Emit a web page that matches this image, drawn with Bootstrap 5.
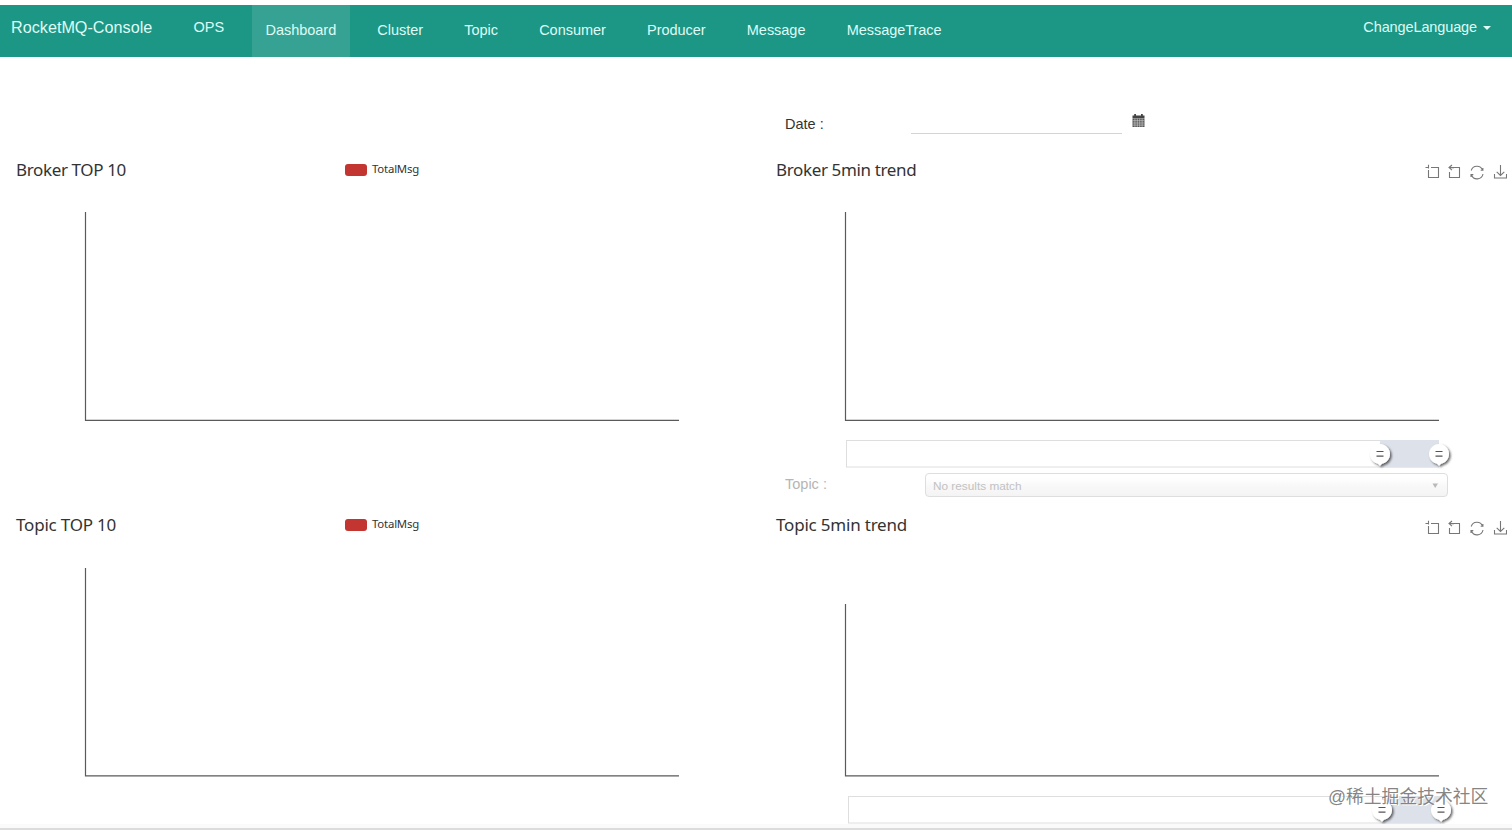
<!DOCTYPE html>
<html lang="en">
<head>
<meta charset="utf-8">
<title>RocketMQ-Console</title>
<link rel="stylesheet" href="https://cdn.jsdelivr.net/npm/bootstrap@5.3.0/dist/css/bootstrap.min.css">
<style>
body{font-family:"Liberation Sans",Arial,sans-serif;font-size:14.5px;color:#333;background:#fff;height:830px;overflow:hidden}
.console-nav{height:52.4px;margin-top:5px;padding:0 21px 0 11px;background:#1c9786;font-size:14.5px;line-height:20px}
.console-nav a{color:#dffbf5;text-decoration:none;white-space:nowrap}
.console-nav .brand-link{font-size:16.2px;width:182.5px;padding-top:12px}
.console-nav .ops-link{width:58.5px;padding-top:12px}
.console-nav .tab-link{padding:15px 13.5px 0;margin-right:14.2px;height:100%;letter-spacing:-.03px}
.console-nav .tab-link.active{background:#36a293}
.console-nav .lang-link{padding-top:12px;letter-spacing:-.12px}
.caret-down{border:4px solid transparent;border-top-color:#dffbf5;border-bottom:0;margin-left:6px}
.filter-band{height:87.6px;padding-top:47px}
.date-label{width:126px;line-height:40px}
.date-field{width:211px;height:30px;border:0;border-bottom:1px solid #d4d4d4;border-radius:0;background:transparent}
.left-pane{width:760px}.right-pane{width:752px}
.panel-head{height:50px;font-family:"Noto Sans","Open Sans",sans-serif}
.panel-title{font-size:17px;line-height:24px;color:#333;padding-left:16px;white-space:nowrap;letter-spacing:-.36px}
.title-lower{letter-spacing:-.2px;margin-top:-1px}
.legend-row{font-size:11.4px;line-height:16px;left:345px;top:16px;letter-spacing:-.2px}
.legend-lower{top:15px}
.legend-chip{width:22px;height:12px;border-radius:3px;background:#c23531;margin:2px 5px 0 0}
.tools{right:5px;top:19px}
.topic-band{height:31px;color:#b5b5b5;padding:3px 0 0 25px}
.topic-label{width:140px;line-height:23px}
.topic-select{width:523px;height:24px;border:1px solid #dedede;border-radius:4px;background:linear-gradient(#fff 20%,#f8f8f8 55%,#f4f4f4);font-size:11.8px;color:#c2c2c2;padding:3px 8px 0 7px}
.plot{display:block}
.foot-strip{height:6px;background:#fafafa;border-bottom:2px solid #dcdcdc}
.watermark{left:1328px;top:784px;font:17.8px/27px "Liberation Sans","Noto Sans CJK SC",sans-serif;color:rgba(125,125,125,.95);text-shadow:1px 1px 0 #fff;white-space:nowrap}
</style>
</head>
<body class="position-relative">
<nav class="console-nav d-flex">
  <a class="brand-link" href="#">RocketMQ-Console</a>
  <a class="ops-link" href="#">OPS</a>
  <a class="tab-link active" href="#">Dashboard</a>
  <a class="tab-link" href="#">Cluster</a>
  <a class="tab-link" href="#">Topic</a>
  <a class="tab-link" href="#">Consumer</a>
  <a class="tab-link" href="#">Producer</a>
  <a class="tab-link" href="#">Message</a>
  <a class="tab-link" href="#">MessageTrace</a>
  <a class="lang-link ms-auto" href="#">ChangeLanguage<span class="caret-down d-inline-block align-middle"></span></a>
</nav>

<svg width="0" height="0" class="position-absolute">
  <defs>
    <filter id="drop" x="-40%" y="-40%" width="190%" height="190%"><feDropShadow dx="1.6" dy="1.6" stdDeviation="1" flood-color="#000" flood-opacity=".6"/></filter>
    <g id="handle">
      <path d="M-2 9.8 L0 11.8 L2 9.8 A10 10 0 1 0 -2 9.8Z" fill="#fff" filter="url(#drop)"/>
      <path d="M-3.5 -2.5H3.5M-3.5 2.2H3.5" stroke="#555" stroke-width="1.2"/>
    </g>
    <g id="toolset" fill="none" stroke="#777" stroke-width="1.1">
      <path d="M.5 3.5H4M6 3.5H13.5V13.5H3.5V6M3.5 0.8V4.5"/>
      <path d="M29 3.5H34.5V13.5H24.5V8M27 1L24 3.6L27 6.2M24 3.6H29"/>
      <path d="M46.2 6.5A6 6 0 0 1 57.5 6M58 10A6 6 0 0 1 46.5 11M57.9 3.9V6.3H55.7M46 13V10.6H48.3"/>
      <path d="M75.5 1V11.2M71.7 7.8L75.5 11.4L79.3 7.8M69.5 10V14H81.5V10"/>
    </g>
  </defs>
</svg>

<div class="filter-band d-flex">
  <div class="left-pane"></div>
  <div class="right-pane d-flex ps-4">
    <label class="date-label" for="date" style="margin-left:1px">Date :</label>
    <input class="date-field" id="date">
    <svg class="ms-2" width="16" height="16" viewBox="0 0 16 16" style="margin-top:8px">
      <path d="M2.5 3.5H14.5V6H2.5ZM4.2 2H6V4H4.2ZM11 2H12.8V4H11Z" fill="#444"/>
      <path d="M2.5 6.3H14.5V15H2.5Z" fill="#555"/>
      <path d="M2.5 8.7H14.5M2.5 11H14.5M2.5 13.1H14.5M4.9 6.5V15M7.3 6.5V15M9.7 6.5V15M12.1 6.5V15" stroke="#d5d5d5" stroke-width=".6"/>
    </svg>
  </div>
</div>

<div class="d-flex">
  <section class="left-pane">
    <div class="panel-head position-relative d-flex align-items-center">
      <div class="panel-title">Broker TOP 10</div>
      <div class="legend-row position-absolute d-flex align-items-center"><span class="legend-chip"></span><span>TotalMsg</span></div>
    </div>
    <svg class="plot" width="760" height="275"><path d="M85.5 17V225.3H679" fill="none" stroke="#5a5a5d" stroke-width="1.2"/></svg>
  </section>
  <section class="right-pane">
    <div class="panel-head position-relative d-flex align-items-center">
      <div class="panel-title">Broker 5min trend</div>
      <svg class="tools position-absolute" width="82" height="17"><use href="#toolset"/></svg>
    </div>
    <svg class="plot" width="752" height="275">
      <path d="M85.5 17V225.3H679" fill="none" stroke="#5a5a5d" stroke-width="1.2"/>
      <rect x="86.5" y="245.5" width="592" height="26.5" fill="none" stroke="#dedede"/>
      <rect x="620" y="245" width="59" height="27.5" fill="#dde1ea"/>
      <use href="#handle" x="620" y="259"/><use href="#handle" x="679" y="259"/>
    </svg>
  </section>
</div>

<div class="d-flex">
  <div class="left-pane"></div>
  <div class="right-pane topic-band d-flex">
    <div class="topic-label">Topic :</div>
    <div class="topic-select d-flex align-items-center justify-content-between">No results match
      <svg width="7" height="6"><path d="M.5 .5H6L3.2 5Z" fill="#b9b9b9"/></svg>
    </div>
  </div>
</div>

<div class="d-flex">
  <section class="left-pane">
    <div class="panel-head position-relative d-flex align-items-center">
      <div class="panel-title title-lower">Topic TOP 10</div>
      <div class="legend-row legend-lower position-absolute d-flex align-items-center"><span class="legend-chip"></span><span>TotalMsg</span></div>
    </div>
    <svg class="plot" width="760" height="273"><path d="M85.5 17V224.8H679" fill="none" stroke="#5a5a5d" stroke-width="1.2"/></svg>
  </section>
  <section class="right-pane">
    <div class="panel-head position-relative d-flex align-items-center">
      <div class="panel-title title-lower">Topic 5min trend</div>
      <svg class="tools position-absolute" width="82" height="17"><use href="#toolset"/></svg>
    </div>
    <svg class="plot" width="752" height="273">
      <path d="M85.5 53V224.8H679" fill="none" stroke="#5a5a5d" stroke-width="1.2"/>
      <rect x="88.5" y="245.5" width="592" height="26.5" fill="none" stroke="#dedede"/>
      <rect x="622" y="245" width="59" height="27.5" fill="#dde1ea"/>
      <use href="#handle" x="622" y="259"/><use href="#handle" x="681" y="259"/>
    </svg>
  </section>
</div>
<div class="foot-strip"></div>
<div class="watermark position-absolute">@稀土掘金技术社区</div>
<script src="https://cdn.jsdelivr.net/npm/bootstrap@5.3.0/dist/js/bootstrap.bundle.min.js"></script>
</body>
</html>
